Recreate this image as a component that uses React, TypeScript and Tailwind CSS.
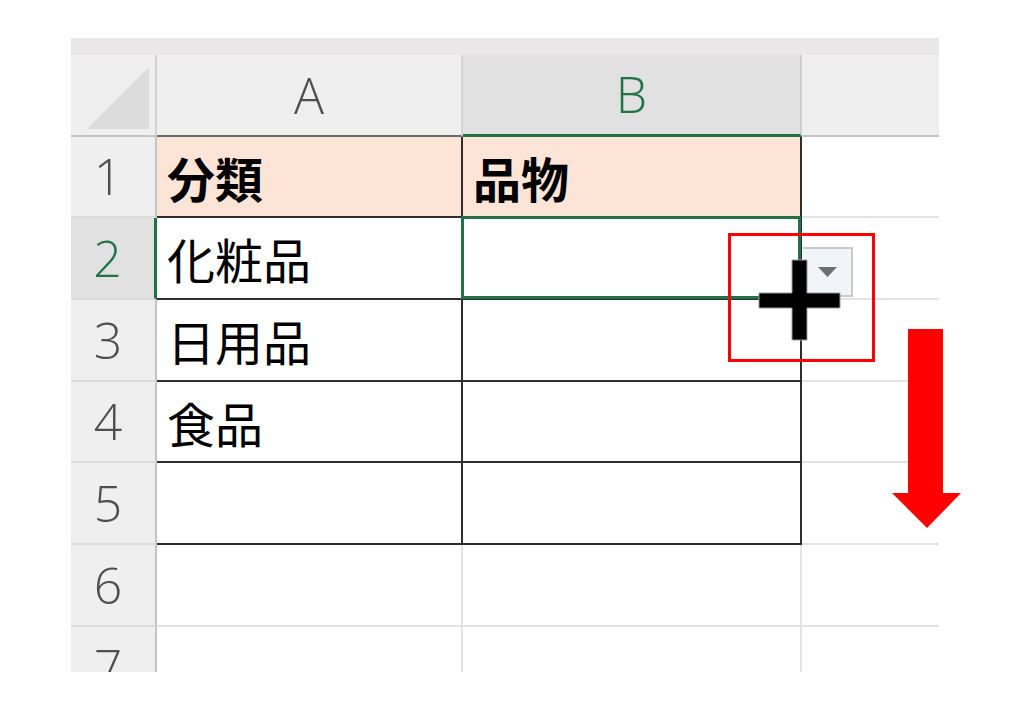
import React from "react";

type Row = {
  n: string;
  h: string;
  a?: string;
  b?: string;
  head?: boolean;
  sel?: boolean;
  inTable: boolean;
};

const rows: Row[] = [
  { n: "1", h: "h-[81px]", a: "分類", b: "品物", head: true, inTable: true },
  { n: "2", h: "h-[82px]", a: "化粧品", sel: true, inTable: true },
  { n: "3", h: "h-[82px]", a: "日用品", inTable: true },
  { n: "4", h: "h-[81px]", a: "食品", inTable: true },
  { n: "5", h: "h-[82px]", a: "", inTable: true },
  { n: "6", h: "h-[82px]", inTable: false },
  { n: "7", h: "h-[82px]", inTable: false },
];

const latin = "font-['Open_Sans','Noto_Sans',sans-serif]";
const cjk = "font-['Noto_Sans_CJK_JP','Noto_Sans',sans-serif]";

function HeaderRow() {
  return (
    <div className="flex h-[82px] shrink-0">
      <div className="relative w-[86px] shrink-0 bg-[#efefef] border-r-2 border-b-2 border-r-[#d2d2d2] border-b-[#c4c4c4]">
        <svg className="absolute left-[14px] top-[10px]" width="66" height="66" viewBox="0 0 66 66">
          <polygon points="2,64 64,64 64,2" fill="#dcdcdc" />
        </svg>
      </div>
      <div className={`w-[306px] shrink-0 bg-[#efefef] border-r-2 border-b-2 border-r-[#d4d4d4] border-b-[#6b6b6b] flex items-center justify-center text-[50px] font-light text-[#4f4f4f] ${latin}`}>
        A
      </div>
      <div className={`w-[339px] shrink-0 bg-[#e1e1e1] border-r-2 border-b-[3px] border-r-[#cdcdcd] border-b-[#217346] flex items-center justify-center text-[50px] font-light text-[#217346] ${latin}`}>
        B
      </div>
      <div className="w-[137px] shrink-0 bg-[#efefef] border-b-2 border-b-[#c4c4c4]" />
    </div>
  );
}

function SheetRow({ row }: { row: Row }) {
  const tableCell = "border-r-2 border-b-2 border-[#2e2e2e]";
  const gridCell = "border-r-2 border-b-2 border-[#e3e3e3]";
  return (
    <div className={`flex shrink-0 ${row.h}`}>
      <div
        className={`w-[86px] shrink-0 border-b-2 border-b-[#dcdcdc] flex items-center justify-center pr-[10px] text-[50px] font-light ${latin} ${
          row.sel
            ? "bg-[#e1e1e1] text-[#217346] border-r-[3px] border-r-[#217346]"
            : "bg-[#efefef] text-[#4f4f4f] border-r-2 border-r-[#c4c4c4]"
        }`}
      >
        {row.n}
      </div>
      <div
        className={`w-[306px] shrink-0 flex items-center pl-[10px] text-[48px] text-black ${cjk} ${
          row.inTable ? tableCell : gridCell
        } ${row.head ? "bg-[#fce4d6] font-bold" : "bg-white"}`}
      >
        {row.a}
      </div>
      <div
        className={`relative w-[339px] shrink-0 flex items-center pl-[10px] text-[48px] text-black ${cjk} ${
          row.inTable ? tableCell : gridCell
        } ${row.head ? "bg-[#fce4d6] font-bold" : "bg-white"}`}
      >
        {row.b}
        {row.sel && (
          <div className="absolute -left-[2px] -top-[2px] -right-[1px] -bottom-[1px] border-[3px] border-[#217346]" />
        )}
      </div>
      <div className="relative w-[137px] shrink-0 bg-white border-b-2 border-[#e3e3e3]">
        {row.sel && (
          <div className="absolute left-[1px] top-[29px] w-[50px] h-[50px] bg-[#f1f4f8] border-t-2 border-r-2 border-b-2 border-[#c9c9c9] flex items-center justify-center">
            <svg width="19" height="10" viewBox="0 0 19 10">
              <polygon points="0,0 19,0 9.5,10" fill="#6f6f6f" />
            </svg>
          </div>
        )}
      </div>
    </div>
  );
}

export default function App() {
  return (
    <div className="relative w-[1024px] h-[712px] bg-white pt-[38px] pl-[71px] overflow-hidden">
      <div className="w-[868px] h-[634px] overflow-hidden flex flex-col">
        <div className="h-[17px] shrink-0 bg-[#e9e7e8]" />
        <HeaderRow />
        {rows.map((r) => (
          <SheetRow key={r.n} row={r} />
        ))}
      </div>

      {/* red highlight box */}
      <div className="absolute left-[728px] top-[233px] w-[147px] h-[129px] border-[3px] border-[#ff0000]" />

      {/* fill cursor */}
      <svg className="absolute left-[757px] top-[258px]" width="85" height="84" viewBox="0 0 85 84">
        <path
          d="M35 2 H50 V35 H83 V50 H50 V82 H35 V50 H2 V35 H35 Z"
          fill="#000"
          stroke="#9a9a9a"
          strokeWidth="1"
        />
      </svg>

      {/* red arrow */}
      <svg className="absolute left-[892px] top-[329px]" width="69" height="199" viewBox="0 0 69 199">
        <polygon points="16,0 51,0 51,164 69,164 35,199 0,164 16,164" fill="#ff0000" />
      </svg>
    </div>
  );
}
